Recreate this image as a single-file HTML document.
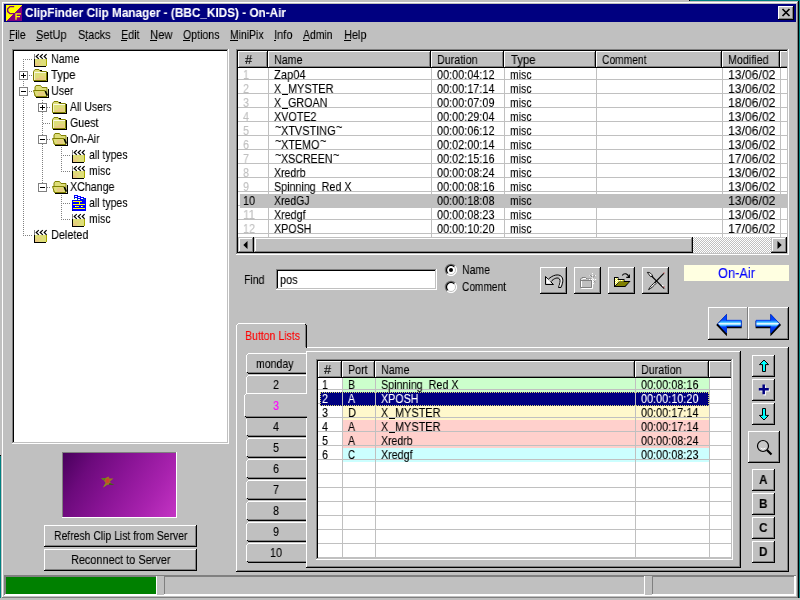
<!DOCTYPE html>
<html><head><meta charset="utf-8"><title>ClipFinder Clip Manager</title>
<style>
html,body{margin:0;padding:0}
body{width:800px;height:600px;overflow:hidden;background:#c0c0c0;position:relative;font-family:"Liberation Sans",sans-serif}
div,span,svg{position:absolute;display:block}
span{white-space:nowrap;transform-origin:0 0;will-change:transform;-webkit-text-stroke:0.1px}
svg{overflow:visible}
</style></head><body>
<div style="left:690px;top:0px;width:110px;height:1px;background:#008080;"></div>
<div style="left:689px;top:0px;width:1px;height:1px;background:#000;"></div>
<div style="left:799px;top:0px;width:1px;height:598px;background:#008080;"></div>
<div style="left:0px;top:456px;width:1px;height:142px;background:#008080;"></div>
<div style="left:0px;top:455px;width:1px;height:1px;background:#000;"></div>
<div style="left:2px;top:2px;width:795px;height:1px;background:#fff;"></div>
<div style="left:2px;top:2px;width:1px;height:595px;background:#fff;"></div>
<div style="left:797px;top:2px;width:1px;height:596px;background:#808080;"></div>
<div style="left:798px;top:1px;width:1px;height:597px;background:#000;"></div>
<div style="left:2px;top:597px;width:796px;height:1px;background:#808080;"></div>
<div style="left:4px;top:4px;width:792px;height:18px;background:#000080;"></div>
<svg style="left:6px;top:5px" width="16" height="16" viewBox="0 0 16 16" shape-rendering="crispEdges">
<rect width="16" height="16" fill="#800080"/><polygon points="0,0 16,0 0,16" fill="#ffff00"/>
<path d="M8.2,1.6 H4 L1.7,3.8 V6.6 L4,8.7 H8.2" fill="none" stroke="#800080" stroke-width="1.3" shape-rendering="auto"/>
<path d="M10,14.8 V8.8 H15 M10,11.7 H14" fill="none" stroke="#ffff00" stroke-width="1.3" shape-rendering="auto"/>
</svg>
<span style="left:24.7px;top:6px;font-size:13px;line-height:13px;color:#fff;font-weight:bold;transform:scaleX(0.9058)">ClipFinder&nbsp;Clip&nbsp;Manager&nbsp;-&nbsp;(BBC_KIDS)&nbsp;-&nbsp;On-Air</span>
<div style="left:778px;top:6px;width:16px;height:14px;background:#c0c0c0;"></div>
<div style="left:778px;top:6px;width:16px;height:1px;background:#fff;"></div>
<div style="left:778px;top:6px;width:1px;height:14px;background:#fff;"></div>
<div style="left:778px;top:19px;width:16px;height:1px;background:#000;"></div>
<div style="left:793px;top:6px;width:1px;height:14px;background:#000;"></div>
<div style="left:779px;top:18px;width:14px;height:1px;background:#808080;"></div>
<div style="left:792px;top:7px;width:1px;height:12px;background:#808080;"></div>
<svg style="left:782px;top:9px" width="8" height="7" viewBox="0 0 8 7"><path d="M0.5,0 L7.5,7 M7.5,0 L0.5,7" stroke="#000" stroke-width="1.7" fill="none"/></svg>
<span style="left:8.7px;top:28px;font-size:13px;line-height:13px;color:#000;transform:scaleX(0.7875)">File</span>
<div style="left:9px;top:40px;width:5px;height:1px;background:#000;"></div>
<span style="left:35.7px;top:28px;font-size:13px;line-height:13px;color:#000;transform:scaleX(0.8439)">SetUp</span>
<div style="left:36px;top:40px;width:6px;height:1px;background:#000;"></div>
<span style="left:77.7px;top:28px;font-size:13px;line-height:13px;color:#000;transform:scaleX(0.8330)">Stacks</span>
<div style="left:85px;top:40px;width:2px;height:1px;background:#000;"></div>
<span style="left:120.7px;top:28px;font-size:13px;line-height:13px;color:#000;transform:scaleX(0.8257)">Edit</span>
<div style="left:121px;top:40px;width:6px;height:1px;background:#000;"></div>
<span style="left:149.7px;top:28px;font-size:13px;line-height:13px;color:#000;transform:scaleX(0.8649)">New</span>
<div style="left:150px;top:40px;width:7px;height:1px;background:#000;"></div>
<span style="left:182.7px;top:28px;font-size:13px;line-height:13px;color:#000;transform:scaleX(0.8145)">Options</span>
<div style="left:183px;top:40px;width:7px;height:1px;background:#000;"></div>
<span style="left:229.7px;top:28px;font-size:13px;line-height:13px;color:#000;transform:scaleX(0.7994)">MiniPix</span>
<div style="left:230px;top:40px;width:8px;height:1px;background:#000;"></div>
<span style="left:273.7px;top:28px;font-size:13px;line-height:13px;color:#000;transform:scaleX(0.8530)">Info</span>
<div style="left:274px;top:40px;width:2px;height:1px;background:#000;"></div>
<span style="left:302.7px;top:28px;font-size:13px;line-height:13px;color:#000;transform:scaleX(0.8003)">Admin</span>
<div style="left:303px;top:40px;width:6px;height:1px;background:#000;"></div>
<span style="left:343.7px;top:28px;font-size:13px;line-height:13px;color:#000;transform:scaleX(0.8411)">Help</span>
<div style="left:344px;top:40px;width:7px;height:1px;background:#000;"></div>
<div style="left:12px;top:49px;width:217px;height:395px;background:#fff;"></div>
<div style="left:12px;top:49px;width:217px;height:1px;background:#808080;"></div>
<div style="left:12px;top:49px;width:1px;height:395px;background:#808080;"></div>
<div style="left:12px;top:443px;width:217px;height:1px;background:#fff;"></div>
<div style="left:228px;top:49px;width:1px;height:395px;background:#fff;"></div>
<div style="left:13px;top:50px;width:215px;height:1px;background:#000;"></div>
<div style="left:13px;top:50px;width:1px;height:393px;background:#000;"></div>
<div style="left:13px;top:442px;width:215px;height:1px;background:#c0c0c0;"></div>
<div style="left:227px;top:50px;width:1px;height:393px;background:#c0c0c0;"></div>
<div style="left:23px;top:59px;width:1px;height:177px;background:repeating-linear-gradient(180deg,#808080 0 1px,transparent 1px 2px)"></div>
<div style="left:42px;top:100px;width:1px;height:88px;background:repeating-linear-gradient(180deg,#808080 0 1px,transparent 1px 2px)"></div>
<div style="left:61px;top:147px;width:1px;height:25px;background:repeating-linear-gradient(180deg,#808080 0 1px,transparent 1px 2px)"></div>
<div style="left:61px;top:195px;width:1px;height:25px;background:repeating-linear-gradient(180deg,#808080 0 1px,transparent 1px 2px)"></div>
<div style="left:23px;top:59px;width:9px;height:1px;background:repeating-linear-gradient(90deg,#808080 0 1px,transparent 1px 2px)"></div>
<svg style="left:34px;top:54px" width="13" height="13" viewBox="0 0 13 13">
<rect x="0" y="0" width="1" height="5" fill="#808080"/>
<rect x="1" y="5" width="11" height="7" fill="#dede78"/>
<rect x="1" y="9" width="4" height="3" fill="#e8c880"/><rect x="3" y="7" width="4" height="3" fill="#e4d27c"/>
<rect x="12" y="5" width="1" height="7" fill="#a8a800"/>
<rect x="0" y="5" width="1" height="8" fill="#000"/><rect x="0" y="12" width="12" height="1" fill="#000"/>
<path d="M4.8,0.1 L2.2,2.5 L4.8,4.9 M8.8,0.1 L6.2,2.5 L8.8,4.9 M12.6,0.1 L10.2,2.5 L12.6,4.9" fill="none" stroke="#000" stroke-width="1.2" stroke-linecap="butt"/>
</svg>
<span style="left:51.2px;top:52px;font-size:13px;line-height:13px;color:#000;transform:scaleX(0.8216)">Name</span>
<div style="left:29px;top:75px;width:3px;height:1px;background:repeating-linear-gradient(90deg,#808080 0 1px,transparent 1px 2px)"></div>
<div style="left:19px;top:71px;width:9px;height:9px;background:#808080;"></div>
<div style="left:20px;top:72px;width:7px;height:7px;background:#fff;"></div>
<div style="left:21px;top:75px;width:5px;height:1px;background:#000;"></div>
<div style="left:23px;top:73px;width:1px;height:5px;background:#000;"></div>
<svg style="left:33px;top:69px" width="15" height="13" viewBox="0 0 15 13" shape-rendering="crispEdges">
<path d="M1,2 L2,1 H6 L7,2 V3 H13 V12 H1 Z" fill="#dede78"/>
<rect x="6" y="7" width="6" height="4" fill="#e6cf80"/><rect x="3" y="9" width="5" height="2" fill="#e8c880"/>
<rect x="2" y="3" width="11" height="1" fill="#fff" opacity=".8"/><rect x="1" y="3" width="1" height="8" fill="#fff" opacity=".6"/>
<path d="M0.5,2.5 V11.5 H13.5 V2.5 H7.5 M0.5,2.5 L2,0.5 H6 L7.5,2.5" fill="none" stroke="#808000" stroke-width="1" shape-rendering="auto"/>
<rect x="14" y="3" width="1" height="10" fill="#000"/><rect x="1" y="12" width="14" height="1" fill="#000"/>
<rect x="7" y="1" width="2" height="1" fill="#000"/>
</svg>
<span style="left:51.2px;top:68px;font-size:13px;line-height:13px;color:#000;transform:scaleX(0.8692)">Type</span>
<div style="left:29px;top:91px;width:3px;height:1px;background:repeating-linear-gradient(90deg,#808080 0 1px,transparent 1px 2px)"></div>
<div style="left:19px;top:87px;width:9px;height:9px;background:#808080;"></div>
<div style="left:20px;top:88px;width:7px;height:7px;background:#fff;"></div>
<div style="left:21px;top:91px;width:5px;height:1px;background:#000;"></div>
<svg style="left:33px;top:85px" width="16" height="13" viewBox="0 0 16 13">
<path d="M2,2 L3,0.5 H7.5 L9,2.5 H14 V11 H2 Z" fill="#dede78" stroke="#808000" stroke-width="1"/>
<path d="M0.5,5.5 H12 L14,11.5 H2.5 Z" fill="#dede78" stroke="#808000" stroke-width="1"/>
<rect x="5" y="7" width="6" height="4" fill="#e6cc80"/>
<path d="M12.3,6 L14.3,10.5" stroke="#000" stroke-width="1.6"/>
<rect x="15" y="4" width="1" height="8" fill="#000"/><rect x="3" y="12" width="13" height="1" fill="#000"/>
</svg>
<span style="left:51.2px;top:84px;font-size:13px;line-height:13px;color:#000;transform:scaleX(0.8196)">User</span>
<div style="left:47px;top:107px;width:4px;height:1px;background:repeating-linear-gradient(90deg,#808080 0 1px,transparent 1px 2px)"></div>
<div style="left:38px;top:103px;width:9px;height:9px;background:#808080;"></div>
<div style="left:39px;top:104px;width:7px;height:7px;background:#fff;"></div>
<div style="left:40px;top:107px;width:5px;height:1px;background:#000;"></div>
<div style="left:42px;top:105px;width:1px;height:5px;background:#000;"></div>
<svg style="left:52px;top:101px" width="15" height="13" viewBox="0 0 15 13" shape-rendering="crispEdges">
<path d="M1,2 L2,1 H6 L7,2 V3 H13 V12 H1 Z" fill="#dede78"/>
<rect x="6" y="7" width="6" height="4" fill="#e6cf80"/><rect x="3" y="9" width="5" height="2" fill="#e8c880"/>
<rect x="2" y="3" width="11" height="1" fill="#fff" opacity=".8"/><rect x="1" y="3" width="1" height="8" fill="#fff" opacity=".6"/>
<path d="M0.5,2.5 V11.5 H13.5 V2.5 H7.5 M0.5,2.5 L2,0.5 H6 L7.5,2.5" fill="none" stroke="#808000" stroke-width="1" shape-rendering="auto"/>
<rect x="14" y="3" width="1" height="10" fill="#000"/><rect x="1" y="12" width="14" height="1" fill="#000"/>
<rect x="7" y="1" width="2" height="1" fill="#000"/>
</svg>
<span style="left:70.2px;top:100px;font-size:13px;line-height:13px;color:#000;transform:scaleX(0.7978)">All&nbsp;Users</span>
<div style="left:43px;top:123px;width:8px;height:1px;background:repeating-linear-gradient(90deg,#808080 0 1px,transparent 1px 2px)"></div>
<svg style="left:52px;top:117px" width="15" height="13" viewBox="0 0 15 13" shape-rendering="crispEdges">
<path d="M1,2 L2,1 H6 L7,2 V3 H13 V12 H1 Z" fill="#dede78"/>
<rect x="6" y="7" width="6" height="4" fill="#e6cf80"/><rect x="3" y="9" width="5" height="2" fill="#e8c880"/>
<rect x="2" y="3" width="11" height="1" fill="#fff" opacity=".8"/><rect x="1" y="3" width="1" height="8" fill="#fff" opacity=".6"/>
<path d="M0.5,2.5 V11.5 H13.5 V2.5 H7.5 M0.5,2.5 L2,0.5 H6 L7.5,2.5" fill="none" stroke="#808000" stroke-width="1" shape-rendering="auto"/>
<rect x="14" y="3" width="1" height="10" fill="#000"/><rect x="1" y="12" width="14" height="1" fill="#000"/>
<rect x="7" y="1" width="2" height="1" fill="#000"/>
</svg>
<span style="left:70.2px;top:116px;font-size:13px;line-height:13px;color:#000;transform:scaleX(0.8216)">Guest</span>
<div style="left:47px;top:139px;width:4px;height:1px;background:repeating-linear-gradient(90deg,#808080 0 1px,transparent 1px 2px)"></div>
<div style="left:38px;top:135px;width:9px;height:9px;background:#808080;"></div>
<div style="left:39px;top:136px;width:7px;height:7px;background:#fff;"></div>
<div style="left:40px;top:139px;width:5px;height:1px;background:#000;"></div>
<svg style="left:52px;top:133px" width="16" height="13" viewBox="0 0 16 13">
<path d="M2,2 L3,0.5 H7.5 L9,2.5 H14 V11 H2 Z" fill="#dede78" stroke="#808000" stroke-width="1"/>
<path d="M0.5,5.5 H12 L14,11.5 H2.5 Z" fill="#dede78" stroke="#808000" stroke-width="1"/>
<rect x="5" y="7" width="6" height="4" fill="#e6cc80"/>
<path d="M12.3,6 L14.3,10.5" stroke="#000" stroke-width="1.6"/>
<rect x="15" y="4" width="1" height="8" fill="#000"/><rect x="3" y="12" width="13" height="1" fill="#000"/>
</svg>
<span style="left:70.2px;top:132px;font-size:13px;line-height:13px;color:#000;transform:scaleX(0.7854)">On-Air</span>
<div style="left:61px;top:155px;width:9px;height:1px;background:repeating-linear-gradient(90deg,#808080 0 1px,transparent 1px 2px)"></div>
<svg style="left:72px;top:150px" width="13" height="13" viewBox="0 0 13 13">
<rect x="0" y="0" width="1" height="5" fill="#808080"/>
<rect x="1" y="5" width="11" height="7" fill="#dede78"/>
<rect x="1" y="9" width="4" height="3" fill="#e8c880"/><rect x="3" y="7" width="4" height="3" fill="#e4d27c"/>
<rect x="12" y="5" width="1" height="7" fill="#a8a800"/>
<rect x="0" y="5" width="1" height="8" fill="#000"/><rect x="0" y="12" width="12" height="1" fill="#000"/>
<path d="M4.8,0.1 L2.2,2.5 L4.8,4.9 M8.8,0.1 L6.2,2.5 L8.8,4.9 M12.6,0.1 L10.2,2.5 L12.6,4.9" fill="none" stroke="#000" stroke-width="1.2" stroke-linecap="butt"/>
</svg>
<span style="left:89.2px;top:148px;font-size:13px;line-height:13px;color:#000;transform:scaleX(0.8071)">all&nbsp;types</span>
<div style="left:61px;top:171px;width:9px;height:1px;background:repeating-linear-gradient(90deg,#808080 0 1px,transparent 1px 2px)"></div>
<svg style="left:72px;top:166px" width="13" height="13" viewBox="0 0 13 13">
<rect x="0" y="0" width="1" height="5" fill="#808080"/>
<rect x="1" y="5" width="11" height="7" fill="#dede78"/>
<rect x="1" y="9" width="4" height="3" fill="#e8c880"/><rect x="3" y="7" width="4" height="3" fill="#e4d27c"/>
<rect x="12" y="5" width="1" height="7" fill="#a8a800"/>
<rect x="0" y="5" width="1" height="8" fill="#000"/><rect x="0" y="12" width="12" height="1" fill="#000"/>
<path d="M4.8,0.1 L2.2,2.5 L4.8,4.9 M8.8,0.1 L6.2,2.5 L8.8,4.9 M12.6,0.1 L10.2,2.5 L12.6,4.9" fill="none" stroke="#000" stroke-width="1.2" stroke-linecap="butt"/>
</svg>
<span style="left:89.2px;top:164px;font-size:13px;line-height:13px;color:#000;transform:scaleX(0.8047)">misc</span>
<div style="left:47px;top:187px;width:4px;height:1px;background:repeating-linear-gradient(90deg,#808080 0 1px,transparent 1px 2px)"></div>
<div style="left:38px;top:183px;width:9px;height:9px;background:#808080;"></div>
<div style="left:39px;top:184px;width:7px;height:7px;background:#fff;"></div>
<div style="left:40px;top:187px;width:5px;height:1px;background:#000;"></div>
<svg style="left:52px;top:181px" width="16" height="13" viewBox="0 0 16 13">
<path d="M2,2 L3,0.5 H7.5 L9,2.5 H14 V11 H2 Z" fill="#dede78" stroke="#808000" stroke-width="1"/>
<path d="M0.5,5.5 H12 L14,11.5 H2.5 Z" fill="#dede78" stroke="#808000" stroke-width="1"/>
<rect x="5" y="7" width="6" height="4" fill="#e6cc80"/>
<path d="M12.3,6 L14.3,10.5" stroke="#000" stroke-width="1.6"/>
<rect x="15" y="4" width="1" height="8" fill="#000"/><rect x="3" y="12" width="13" height="1" fill="#000"/>
</svg>
<span style="left:70.2px;top:180px;font-size:13px;line-height:13px;color:#000;transform:scaleX(0.8205)">XChange</span>
<div style="left:61px;top:203px;width:9px;height:1px;background:repeating-linear-gradient(90deg,#808080 0 1px,transparent 1px 2px)"></div>
<svg style="left:72px;top:195px" width="14" height="16" viewBox="0 0 14 16" shape-rendering="crispEdges">
<rect x="2" y="0" width="4" height="3" fill="#0000ff"/><rect x="5" y="1" width="4" height="3" fill="#0000ff"/><rect x="8" y="2" width="4" height="3" fill="#0000ff"/><rect x="11" y="3" width="3" height="2" fill="#0000ff"/>
<rect x="3" y="1" width="2" height="1" fill="#fff"/><rect x="6" y="2" width="2" height="1" fill="#fff"/><rect x="9" y="3" width="2" height="1" fill="#fff"/>
<rect x="2" y="3" width="1" height="1" fill="#008080"/><rect x="5" y="4" width="1" height="1" fill="#008080"/><rect x="11" y="4" width="2" height="1" fill="#008080"/>
<rect x="0" y="5" width="14" height="11" fill="#0000ff"/>
<rect x="1" y="6" width="9" height="1" fill="#ffff00"/><rect x="7" y="7" width="1" height="2" fill="#ffff00"/><rect x="1" y="9" width="12" height="1" fill="#ffff00"/>
<rect x="3" y="11" width="4" height="1" fill="#ffff00"/><rect x="9" y="11" width="2" height="1" fill="#ffff00"/><rect x="3" y="11" width="1" height="1" fill="#fff"/><rect x="9" y="11" width="1" height="1" fill="#fff"/>
<rect x="1" y="13" width="12" height="1" fill="#ffff00"/><rect x="0" y="15" width="1" height="1" fill="#000080"/>
</svg>
<span style="left:89.2px;top:196px;font-size:13px;line-height:13px;color:#000;transform:scaleX(0.8071)">all&nbsp;types</span>
<div style="left:61px;top:219px;width:9px;height:1px;background:repeating-linear-gradient(90deg,#808080 0 1px,transparent 1px 2px)"></div>
<svg style="left:72px;top:214px" width="13" height="13" viewBox="0 0 13 13">
<rect x="0" y="0" width="1" height="5" fill="#808080"/>
<rect x="1" y="5" width="11" height="7" fill="#dede78"/>
<rect x="1" y="9" width="4" height="3" fill="#e8c880"/><rect x="3" y="7" width="4" height="3" fill="#e4d27c"/>
<rect x="12" y="5" width="1" height="7" fill="#a8a800"/>
<rect x="0" y="5" width="1" height="8" fill="#000"/><rect x="0" y="12" width="12" height="1" fill="#000"/>
<path d="M4.8,0.1 L2.2,2.5 L4.8,4.9 M8.8,0.1 L6.2,2.5 L8.8,4.9 M12.6,0.1 L10.2,2.5 L12.6,4.9" fill="none" stroke="#000" stroke-width="1.2" stroke-linecap="butt"/>
</svg>
<span style="left:89.2px;top:212px;font-size:13px;line-height:13px;color:#000;transform:scaleX(0.8047)">misc</span>
<div style="left:23px;top:235px;width:9px;height:1px;background:repeating-linear-gradient(90deg,#808080 0 1px,transparent 1px 2px)"></div>
<svg style="left:34px;top:230px" width="13" height="13" viewBox="0 0 13 13">
<rect x="0" y="0" width="1" height="5" fill="#808080"/>
<rect x="1" y="5" width="11" height="7" fill="#dede78"/>
<rect x="1" y="9" width="4" height="3" fill="#e8c880"/><rect x="3" y="7" width="4" height="3" fill="#e4d27c"/>
<rect x="12" y="5" width="1" height="7" fill="#a8a800"/>
<rect x="0" y="5" width="1" height="8" fill="#000"/><rect x="0" y="12" width="12" height="1" fill="#000"/>
<path d="M4.8,0.1 L2.2,2.5 L4.8,4.9 M8.8,0.1 L6.2,2.5 L8.8,4.9 M12.6,0.1 L10.2,2.5 L12.6,4.9" fill="none" stroke="#000" stroke-width="1.2" stroke-linecap="butt"/>
</svg>
<span style="left:51.2px;top:228px;font-size:13px;line-height:13px;color:#000;transform:scaleX(0.8365)">Deleted</span>
<div style="left:236px;top:49px;width:553px;height:206px;background:#fff;"></div>
<div style="left:236px;top:49px;width:553px;height:1px;background:#808080;"></div>
<div style="left:236px;top:49px;width:1px;height:206px;background:#808080;"></div>
<div style="left:236px;top:254px;width:553px;height:1px;background:#fff;"></div>
<div style="left:788px;top:49px;width:1px;height:206px;background:#fff;"></div>
<div style="left:237px;top:50px;width:551px;height:1px;background:#000;"></div>
<div style="left:237px;top:50px;width:1px;height:204px;background:#000;"></div>
<div style="left:237px;top:253px;width:551px;height:1px;background:#c0c0c0;"></div>
<div style="left:787px;top:50px;width:1px;height:204px;background:#c0c0c0;"></div>
<div style="left:238px;top:51px;width:30px;height:17px;background:#c0c0c0;"></div>
<div style="left:238px;top:51px;width:30px;height:1px;background:#fff;"></div>
<div style="left:238px;top:51px;width:1px;height:16px;background:#fff;"></div>
<div style="left:238px;top:67px;width:30px;height:1px;background:#000;"></div>
<div style="left:267px;top:51px;width:1px;height:17px;background:#000;"></div>
<div style="left:239px;top:66px;width:28px;height:1px;background:#808080;"></div>
<div style="left:266px;top:52px;width:1px;height:15px;background:#808080;"></div>
<div style="left:268px;top:51px;width:163px;height:17px;background:#c0c0c0;"></div>
<div style="left:268px;top:51px;width:163px;height:1px;background:#fff;"></div>
<div style="left:268px;top:51px;width:1px;height:16px;background:#fff;"></div>
<div style="left:268px;top:67px;width:163px;height:1px;background:#000;"></div>
<div style="left:430px;top:51px;width:1px;height:17px;background:#000;"></div>
<div style="left:269px;top:66px;width:161px;height:1px;background:#808080;"></div>
<div style="left:429px;top:52px;width:1px;height:15px;background:#808080;"></div>
<div style="left:431px;top:51px;width:73px;height:17px;background:#c0c0c0;"></div>
<div style="left:431px;top:51px;width:73px;height:1px;background:#fff;"></div>
<div style="left:431px;top:51px;width:1px;height:16px;background:#fff;"></div>
<div style="left:431px;top:67px;width:73px;height:1px;background:#000;"></div>
<div style="left:503px;top:51px;width:1px;height:17px;background:#000;"></div>
<div style="left:432px;top:66px;width:71px;height:1px;background:#808080;"></div>
<div style="left:502px;top:52px;width:1px;height:15px;background:#808080;"></div>
<div style="left:504px;top:51px;width:92px;height:17px;background:#c0c0c0;"></div>
<div style="left:504px;top:51px;width:92px;height:1px;background:#fff;"></div>
<div style="left:504px;top:51px;width:1px;height:16px;background:#fff;"></div>
<div style="left:504px;top:67px;width:92px;height:1px;background:#000;"></div>
<div style="left:595px;top:51px;width:1px;height:17px;background:#000;"></div>
<div style="left:505px;top:66px;width:90px;height:1px;background:#808080;"></div>
<div style="left:594px;top:52px;width:1px;height:15px;background:#808080;"></div>
<div style="left:596px;top:51px;width:126px;height:17px;background:#c0c0c0;"></div>
<div style="left:596px;top:51px;width:126px;height:1px;background:#fff;"></div>
<div style="left:596px;top:51px;width:1px;height:16px;background:#fff;"></div>
<div style="left:596px;top:67px;width:126px;height:1px;background:#000;"></div>
<div style="left:721px;top:51px;width:1px;height:17px;background:#000;"></div>
<div style="left:597px;top:66px;width:124px;height:1px;background:#808080;"></div>
<div style="left:720px;top:52px;width:1px;height:15px;background:#808080;"></div>
<div style="left:722px;top:51px;width:58px;height:17px;background:#c0c0c0;"></div>
<div style="left:722px;top:51px;width:58px;height:1px;background:#fff;"></div>
<div style="left:722px;top:51px;width:1px;height:16px;background:#fff;"></div>
<div style="left:722px;top:67px;width:58px;height:1px;background:#000;"></div>
<div style="left:779px;top:51px;width:1px;height:17px;background:#000;"></div>
<div style="left:723px;top:66px;width:56px;height:1px;background:#808080;"></div>
<div style="left:778px;top:52px;width:1px;height:15px;background:#808080;"></div>
<div style="left:780px;top:51px;width:7px;height:17px;background:#c0c0c0;"></div>
<div style="left:780px;top:51px;width:7px;height:1px;background:#fff;"></div>
<div style="left:780px;top:51px;width:1px;height:16px;background:#fff;"></div>
<div style="left:780px;top:67px;width:7px;height:1px;background:#000;"></div>
<div style="left:781px;top:66px;width:6px;height:1px;background:#808080;"></div>
<span style="left:244.7px;top:53px;font-size:13px;line-height:13px;color:#000;transform:scaleX(0.9676)">#</span>
<span style="left:273.7px;top:53px;font-size:13px;line-height:13px;color:#000;transform:scaleX(0.8216)">Name</span>
<span style="left:436.7px;top:53px;font-size:13px;line-height:13px;color:#000;transform:scaleX(0.8239)">Duration</span>
<span style="left:510.7px;top:53px;font-size:13px;line-height:13px;color:#000;transform:scaleX(0.8692)">Type</span>
<span style="left:601.7px;top:53px;font-size:13px;line-height:13px;color:#000;transform:scaleX(0.7896)">Comment</span>
<span style="left:727.7px;top:53px;font-size:13px;line-height:13px;color:#000;transform:scaleX(0.8239)">Modified</span>
<div style="left:238px;top:79px;width:549px;height:1px;background:#c0c0c0;"></div>
<div style="left:238px;top:93px;width:549px;height:1px;background:#c0c0c0;"></div>
<div style="left:238px;top:107px;width:549px;height:1px;background:#c0c0c0;"></div>
<div style="left:238px;top:121px;width:549px;height:1px;background:#c0c0c0;"></div>
<div style="left:238px;top:135px;width:549px;height:1px;background:#c0c0c0;"></div>
<div style="left:238px;top:149px;width:549px;height:1px;background:#c0c0c0;"></div>
<div style="left:238px;top:163px;width:549px;height:1px;background:#c0c0c0;"></div>
<div style="left:238px;top:177px;width:549px;height:1px;background:#c0c0c0;"></div>
<div style="left:238px;top:191px;width:549px;height:1px;background:#c0c0c0;"></div>
<div style="left:238px;top:205px;width:549px;height:1px;background:#c0c0c0;"></div>
<div style="left:238px;top:219px;width:549px;height:1px;background:#c0c0c0;"></div>
<div style="left:238px;top:233px;width:549px;height:1px;background:#c0c0c0;"></div>
<div style="left:268px;top:68px;width:1px;height:169px;background:#c0c0c0;"></div>
<div style="left:431px;top:68px;width:1px;height:169px;background:#c0c0c0;"></div>
<div style="left:504px;top:68px;width:1px;height:169px;background:#c0c0c0;"></div>
<div style="left:596px;top:68px;width:1px;height:169px;background:#c0c0c0;"></div>
<div style="left:722px;top:68px;width:1px;height:169px;background:#c0c0c0;"></div>
<div style="left:780px;top:68px;width:1px;height:169px;background:#c0c0c0;"></div>
<div style="left:240px;top:194px;width:547px;height:14px;background:#c0c0c0;"></div>
<span style="left:242.7px;top:68px;font-size:13px;line-height:13px;color:#c0c0c0;transform:scaleX(0.8294)">1</span>
<span style="left:273.7px;top:68px;font-size:13px;line-height:13px;color:#000;transform:scaleX(0.8542)">Zap04</span>
<span style="left:437.1px;top:68px;font-size:13px;line-height:13px;color:#000;transform:scaleX(0.8369)">00:00:04:12</span>
<span style="left:510.4px;top:68px;font-size:13px;line-height:13px;color:#000;transform:scaleX(0.8047)">misc</span>
<span style="left:727.7px;top:68px;font-size:13px;line-height:13px;color:#000;transform:scaleX(0.9383)">13/06/02</span>
<span style="left:242.7px;top:82px;font-size:13px;line-height:13px;color:#c0c0c0;transform:scaleX(0.8294)">2</span>
<span style="left:273.7px;top:82px;font-size:13px;line-height:13px;color:#000;transform:scaleX(0.8072)">X</span>
<div style="left:282px;top:94px;width:6px;height:1px;background:#000;"></div>
<span style="left:287.7px;top:82px;font-size:13px;line-height:13px;color:#000;transform:scaleX(0.8399)">MYSTER</span>
<span style="left:437.1px;top:82px;font-size:13px;line-height:13px;color:#000;transform:scaleX(0.8369)">00:00:17:14</span>
<span style="left:510.4px;top:82px;font-size:13px;line-height:13px;color:#000;transform:scaleX(0.8047)">misc</span>
<span style="left:727.7px;top:82px;font-size:13px;line-height:13px;color:#000;transform:scaleX(0.9383)">13/06/02</span>
<span style="left:242.7px;top:96px;font-size:13px;line-height:13px;color:#c0c0c0;transform:scaleX(0.8294)">3</span>
<span style="left:273.7px;top:96px;font-size:13px;line-height:13px;color:#000;transform:scaleX(0.8072)">X</span>
<div style="left:282px;top:108px;width:6px;height:1px;background:#000;"></div>
<span style="left:287.7px;top:96px;font-size:13px;line-height:13px;color:#000;transform:scaleX(0.8286)">GROAN</span>
<span style="left:437.1px;top:96px;font-size:13px;line-height:13px;color:#000;transform:scaleX(0.8369)">00:00:07:09</span>
<span style="left:510.4px;top:96px;font-size:13px;line-height:13px;color:#000;transform:scaleX(0.8047)">misc</span>
<span style="left:727.7px;top:96px;font-size:13px;line-height:13px;color:#000;transform:scaleX(0.9383)">18/06/02</span>
<span style="left:242.7px;top:110px;font-size:13px;line-height:13px;color:#c0c0c0;transform:scaleX(0.8294)">4</span>
<span style="left:273.7px;top:110px;font-size:13px;line-height:13px;color:#000;transform:scaleX(0.8285)">XVOTE2</span>
<span style="left:437.1px;top:110px;font-size:13px;line-height:13px;color:#000;transform:scaleX(0.8369)">00:00:29:04</span>
<span style="left:510.4px;top:110px;font-size:13px;line-height:13px;color:#000;transform:scaleX(0.8047)">misc</span>
<span style="left:727.7px;top:110px;font-size:13px;line-height:13px;color:#000;transform:scaleX(0.9383)">13/06/02</span>
<span style="left:242.7px;top:124px;font-size:13px;line-height:13px;color:#c0c0c0;transform:scaleX(0.8294)">5</span>
<span style="left:275.0px;top:120px;font-size:13px;line-height:13px;color:#000;transform:scaleX(0.8560)">~</span>
<span style="left:280.5px;top:124px;font-size:13px;line-height:13px;color:#000;transform:scaleX(0.8385)">XTVSTING</span>
<span style="left:335.5px;top:120px;font-size:13px;line-height:13px;color:#000;transform:scaleX(0.8560)">~</span>
<span style="left:437.1px;top:124px;font-size:13px;line-height:13px;color:#000;transform:scaleX(0.8369)">00:00:06:12</span>
<span style="left:510.4px;top:124px;font-size:13px;line-height:13px;color:#000;transform:scaleX(0.8047)">misc</span>
<span style="left:727.7px;top:124px;font-size:13px;line-height:13px;color:#000;transform:scaleX(0.9383)">13/06/02</span>
<span style="left:242.7px;top:138px;font-size:13px;line-height:13px;color:#c0c0c0;transform:scaleX(0.8294)">6</span>
<span style="left:275.0px;top:134px;font-size:13px;line-height:13px;color:#000;transform:scaleX(0.8560)">~</span>
<span style="left:280.5px;top:138px;font-size:13px;line-height:13px;color:#000;transform:scaleX(0.8330)">XTEMO</span>
<span style="left:319.5px;top:134px;font-size:13px;line-height:13px;color:#000;transform:scaleX(0.8560)">~</span>
<span style="left:437.1px;top:138px;font-size:13px;line-height:13px;color:#000;transform:scaleX(0.8369)">00:02:00:14</span>
<span style="left:510.4px;top:138px;font-size:13px;line-height:13px;color:#000;transform:scaleX(0.8047)">misc</span>
<span style="left:727.7px;top:138px;font-size:13px;line-height:13px;color:#000;transform:scaleX(0.9383)">13/06/02</span>
<span style="left:242.7px;top:152px;font-size:13px;line-height:13px;color:#c0c0c0;transform:scaleX(0.8294)">7</span>
<span style="left:275.0px;top:148px;font-size:13px;line-height:13px;color:#000;transform:scaleX(0.8560)">~</span>
<span style="left:280.5px;top:152px;font-size:13px;line-height:13px;color:#000;transform:scaleX(0.8193)">XSCREEN</span>
<span style="left:332.5px;top:148px;font-size:13px;line-height:13px;color:#000;transform:scaleX(0.8560)">~</span>
<span style="left:437.1px;top:152px;font-size:13px;line-height:13px;color:#000;transform:scaleX(0.8369)">00:02:15:16</span>
<span style="left:510.4px;top:152px;font-size:13px;line-height:13px;color:#000;transform:scaleX(0.8047)">misc</span>
<span style="left:727.7px;top:152px;font-size:13px;line-height:13px;color:#000;transform:scaleX(0.9383)">17/06/02</span>
<span style="left:242.7px;top:166px;font-size:13px;line-height:13px;color:#c0c0c0;transform:scaleX(0.8294)">8</span>
<span style="left:273.7px;top:166px;font-size:13px;line-height:13px;color:#000;transform:scaleX(0.8070)">Xredrb</span>
<span style="left:437.1px;top:166px;font-size:13px;line-height:13px;color:#000;transform:scaleX(0.8369)">00:00:08:24</span>
<span style="left:510.4px;top:166px;font-size:13px;line-height:13px;color:#000;transform:scaleX(0.8047)">misc</span>
<span style="left:727.7px;top:166px;font-size:13px;line-height:13px;color:#000;transform:scaleX(0.9383)">13/06/02</span>
<span style="left:242.7px;top:180px;font-size:13px;line-height:13px;color:#c0c0c0;transform:scaleX(0.8294)">9</span>
<span style="left:273.7px;top:180px;font-size:13px;line-height:13px;color:#000;transform:scaleX(0.8246)">Spinning&nbsp;&nbsp;Red&nbsp;X</span>
<span style="left:437.1px;top:180px;font-size:13px;line-height:13px;color:#000;transform:scaleX(0.8369)">00:00:08:16</span>
<span style="left:510.4px;top:180px;font-size:13px;line-height:13px;color:#000;transform:scaleX(0.8047)">misc</span>
<span style="left:727.7px;top:180px;font-size:13px;line-height:13px;color:#000;transform:scaleX(0.9383)">13/06/02</span>
<span style="left:242.7px;top:194px;font-size:13px;line-height:13px;color:#000;transform:scaleX(0.8294)">10</span>
<span style="left:273.7px;top:194px;font-size:13px;line-height:13px;color:#000;transform:scaleX(0.8054)">XredGJ</span>
<span style="left:437.1px;top:194px;font-size:13px;line-height:13px;color:#000;transform:scaleX(0.8369)">00:00:18:08</span>
<span style="left:510.4px;top:194px;font-size:13px;line-height:13px;color:#000;transform:scaleX(0.8047)">misc</span>
<span style="left:727.7px;top:194px;font-size:13px;line-height:13px;color:#000;transform:scaleX(0.9383)">13/06/02</span>
<span style="left:242.7px;top:208px;font-size:13px;line-height:13px;color:#c0c0c0;transform:scaleX(0.8889)">11</span>
<span style="left:273.7px;top:208px;font-size:13px;line-height:13px;color:#000;transform:scaleX(0.8222)">Xredgf</span>
<span style="left:437.1px;top:208px;font-size:13px;line-height:13px;color:#000;transform:scaleX(0.8369)">00:00:08:23</span>
<span style="left:510.4px;top:208px;font-size:13px;line-height:13px;color:#000;transform:scaleX(0.8047)">misc</span>
<span style="left:727.7px;top:208px;font-size:13px;line-height:13px;color:#000;transform:scaleX(0.9383)">13/06/02</span>
<span style="left:242.7px;top:222px;font-size:13px;line-height:13px;color:#c0c0c0;transform:scaleX(0.8294)">12</span>
<span style="left:273.7px;top:222px;font-size:13px;line-height:13px;color:#000;transform:scaleX(0.8239)">XPOSH</span>
<span style="left:437.1px;top:222px;font-size:13px;line-height:13px;color:#000;transform:scaleX(0.8369)">00:00:10:20</span>
<span style="left:510.4px;top:222px;font-size:13px;line-height:13px;color:#000;transform:scaleX(0.8047)">misc</span>
<span style="left:727.7px;top:222px;font-size:13px;line-height:13px;color:#000;transform:scaleX(0.9383)">17/06/02</span>
<div style="left:238px;top:237px;width:549px;height:16px;background:#c0c0c0;"></div>
<div style="left:693px;top:237px;width:78px;height:16px;background:#fff;background-image:conic-gradient(#c0c0c0 25%,#fff 0 50%,#c0c0c0 0 75%,#fff 0);background-size:2px 2px"></div>
<div style="left:238px;top:237px;width:16px;height:16px;background:#c0c0c0;"></div>
<div style="left:238px;top:237px;width:16px;height:1px;background:#c0c0c0;"></div>
<div style="left:238px;top:237px;width:1px;height:16px;background:#c0c0c0;"></div>
<div style="left:238px;top:252px;width:16px;height:1px;background:#000;"></div>
<div style="left:253px;top:237px;width:1px;height:16px;background:#000;"></div>
<div style="left:239px;top:238px;width:14px;height:1px;background:#fff;"></div>
<div style="left:239px;top:238px;width:1px;height:14px;background:#fff;"></div>
<div style="left:239px;top:251px;width:14px;height:1px;background:#808080;"></div>
<div style="left:252px;top:238px;width:1px;height:14px;background:#808080;"></div>
<div style="left:771px;top:237px;width:16px;height:16px;background:#c0c0c0;"></div>
<div style="left:771px;top:237px;width:16px;height:1px;background:#c0c0c0;"></div>
<div style="left:771px;top:237px;width:1px;height:16px;background:#c0c0c0;"></div>
<div style="left:771px;top:252px;width:16px;height:1px;background:#000;"></div>
<div style="left:786px;top:237px;width:1px;height:16px;background:#000;"></div>
<div style="left:772px;top:238px;width:14px;height:1px;background:#fff;"></div>
<div style="left:772px;top:238px;width:1px;height:14px;background:#fff;"></div>
<div style="left:772px;top:251px;width:14px;height:1px;background:#808080;"></div>
<div style="left:785px;top:238px;width:1px;height:14px;background:#808080;"></div>
<div style="left:254px;top:237px;width:439px;height:16px;background:#c0c0c0;"></div>
<div style="left:254px;top:237px;width:439px;height:1px;background:#c0c0c0;"></div>
<div style="left:254px;top:237px;width:1px;height:16px;background:#c0c0c0;"></div>
<div style="left:254px;top:252px;width:439px;height:1px;background:#000;"></div>
<div style="left:692px;top:237px;width:1px;height:16px;background:#000;"></div>
<div style="left:255px;top:238px;width:437px;height:1px;background:#fff;"></div>
<div style="left:255px;top:238px;width:1px;height:14px;background:#fff;"></div>
<div style="left:255px;top:251px;width:437px;height:1px;background:#808080;"></div>
<div style="left:691px;top:238px;width:1px;height:14px;background:#808080;"></div>
<svg style="left:243px;top:241px" width="5" height="8" viewBox="0 0 5 8"><polygon points="4.5,0 4.5,8 0.3,4" fill="#000"/></svg>
<svg style="left:777px;top:241px" width="5" height="8" viewBox="0 0 5 8"><polygon points="0.5,0 0.5,8 4.7,4" fill="#000"/></svg>
<span style="left:243.7px;top:273px;font-size:13px;line-height:13px;color:#000;transform:scaleX(0.8104)">Find</span>
<div style="left:276px;top:269px;width:161px;height:21px;background:#fff;"></div>
<div style="left:276px;top:269px;width:161px;height:1px;background:#808080;"></div>
<div style="left:276px;top:269px;width:1px;height:21px;background:#808080;"></div>
<div style="left:276px;top:289px;width:161px;height:1px;background:#fff;"></div>
<div style="left:436px;top:269px;width:1px;height:21px;background:#fff;"></div>
<div style="left:277px;top:270px;width:159px;height:1px;background:#000;"></div>
<div style="left:277px;top:270px;width:1px;height:19px;background:#000;"></div>
<div style="left:277px;top:288px;width:159px;height:1px;background:#c0c0c0;"></div>
<div style="left:435px;top:270px;width:1px;height:19px;background:#c0c0c0;"></div>
<span style="left:279.7px;top:273px;font-size:13px;line-height:13px;color:#000;transform:scaleX(0.8346)">pos</span>
<svg style="left:445px;top:264px" width="12" height="12" viewBox="0 0 12 12">
<circle cx="6" cy="6" r="5.5" fill="#fff"/>
<path d="M10,2 A5.5,5.5 0 0 0 2,10" fill="none" stroke="#707070" stroke-width="1.2"/>
<path d="M9.2,2.8 A4.5,4.5 0 0 0 2.8,9.2" fill="none" stroke="#000" stroke-width="1.3"/>
<path d="M2,10 A5.5,5.5 0 0 0 10,2" fill="none" stroke="#fff" stroke-width="1"/>
<path d="M2.8,9.2 A4.5,4.5 0 0 0 9.2,2.8" fill="none" stroke="#c0c0c0" stroke-width="1"/>
<circle cx="6" cy="6" r="2" fill="#000"/>
</svg>
<svg style="left:445px;top:281px" width="12" height="12" viewBox="0 0 12 12">
<circle cx="6" cy="6" r="5.5" fill="#fff"/>
<path d="M10,2 A5.5,5.5 0 0 0 2,10" fill="none" stroke="#707070" stroke-width="1.2"/>
<path d="M9.2,2.8 A4.5,4.5 0 0 0 2.8,9.2" fill="none" stroke="#000" stroke-width="1.3"/>
<path d="M2,10 A5.5,5.5 0 0 0 10,2" fill="none" stroke="#fff" stroke-width="1"/>
<path d="M2.8,9.2 A4.5,4.5 0 0 0 9.2,2.8" fill="none" stroke="#c0c0c0" stroke-width="1"/>

</svg>
<span style="left:462.0px;top:263px;font-size:13px;line-height:13px;color:#000;transform:scaleX(0.8072)">Name</span>
<span style="left:462.0px;top:280px;font-size:13px;line-height:13px;color:#000;transform:scaleX(0.7807)">Comment</span>
<div style="left:540px;top:267px;width:27px;height:27px;background:#c0c0c0;"></div>
<div style="left:540px;top:267px;width:27px;height:1px;background:#fff;"></div>
<div style="left:540px;top:267px;width:1px;height:27px;background:#fff;"></div>
<div style="left:540px;top:293px;width:27px;height:1px;background:#000;"></div>
<div style="left:566px;top:267px;width:1px;height:27px;background:#000;"></div>
<div style="left:541px;top:292px;width:25px;height:1px;background:#808080;"></div>
<div style="left:565px;top:268px;width:1px;height:25px;background:#808080;"></div>
<div style="left:574px;top:267px;width:27px;height:27px;background:#c0c0c0;"></div>
<div style="left:574px;top:267px;width:27px;height:1px;background:#fff;"></div>
<div style="left:574px;top:267px;width:1px;height:27px;background:#fff;"></div>
<div style="left:574px;top:293px;width:27px;height:1px;background:#000;"></div>
<div style="left:600px;top:267px;width:1px;height:27px;background:#000;"></div>
<div style="left:575px;top:292px;width:25px;height:1px;background:#808080;"></div>
<div style="left:599px;top:268px;width:1px;height:25px;background:#808080;"></div>
<div style="left:608px;top:267px;width:27px;height:27px;background:#c0c0c0;"></div>
<div style="left:608px;top:267px;width:27px;height:1px;background:#fff;"></div>
<div style="left:608px;top:267px;width:1px;height:27px;background:#fff;"></div>
<div style="left:608px;top:293px;width:27px;height:1px;background:#000;"></div>
<div style="left:634px;top:267px;width:1px;height:27px;background:#000;"></div>
<div style="left:609px;top:292px;width:25px;height:1px;background:#808080;"></div>
<div style="left:633px;top:268px;width:1px;height:25px;background:#808080;"></div>
<div style="left:642px;top:267px;width:27px;height:27px;background:#c0c0c0;"></div>
<div style="left:642px;top:267px;width:27px;height:1px;background:#fff;"></div>
<div style="left:642px;top:267px;width:1px;height:27px;background:#fff;"></div>
<div style="left:642px;top:293px;width:27px;height:1px;background:#000;"></div>
<div style="left:668px;top:267px;width:1px;height:27px;background:#000;"></div>
<div style="left:643px;top:292px;width:25px;height:1px;background:#808080;"></div>
<div style="left:667px;top:268px;width:1px;height:25px;background:#808080;"></div>
<svg style="left:540px;top:267px" width="27" height="27" viewBox="0 0 27 27">
<path d="M5.5,9.5 V17.5 H13.5 L10.8,14.8 C14,11 18,10 19.5,12 C21,14 19.5,17 18.5,20.5 L21,20.5 C22.5,17 24,12.5 21.5,9.5 C18.5,6.5 12.5,8 8.3,12.3 Z" fill="#c0c0c0" stroke="#000" stroke-width="1"/>
<path d="M6.5,11 V16.5 H11.5 Z" fill="#fff"/>
<path d="M19.7,19.5 C21,16 22.3,12.5 20.3,10.3" fill="none" stroke="#fff" stroke-width="1"/>
</svg>
<svg style="left:574px;top:267px" width="27" height="27" viewBox="0 0 27 27">
<path d="M6.5,20.5 V12 L8,10.5 H11.5 L13,12 H17.5 V20.5 Z" fill="none" stroke="#fff" stroke-width="1" transform="translate(1,1)"/>
<path d="M6.5,20.5 V12 L8,10.5 H11.5 L13,12 H17.5 V20.5 Z M6.5,13.5 H17.5" fill="none" stroke="#808080" stroke-width="1"/>
<path d="M18.5,6 V11 M15.5,8.5 L21.5,14.5 M15,12.5 H23 M22,8 L17.5,13 M19.5,14 V18" stroke="#fff" stroke-width="1" fill="none" stroke-dasharray="1.2 0.8"/>
<path d="M16.5,8 L18,10.5 M20.5,8.5 L19.5,10.5 M21.5,15 L20,14" stroke="#808080" stroke-width="1" fill="none"/>
</svg>
<svg style="left:608px;top:267px" width="27" height="27" viewBox="0 0 27 27">
<path d="M6,20 V10 H10.5 V12 H16.5 V14 H22.6 L17.3,20 Z" fill="#000"/>
<path d="M7,18.5 V11 H9.7 V13 H15.7 V14.5 H10.5 Z" fill="#ffff40"/>
<path d="M7,11 h1 v1 h-1z M9,11 h.7 v1 h-.7z M8,12 h1 v1 h-1z M7,13 h1 v1 h-1z M9,13 h1 v1 h-1z M11,13 h1 v1 h-1z M13,13 h1 v1 h-1z M8,14 h1 v1 h-1z M10,14 h1 v.5 h-1z M7,15 h1 v1 h-1z M9,15 h.8 v1 h-.8z M8,16 h.8 v1 h-.8z M7,17 h.7 v1 h-.7z" fill="#fff"/>
<path d="M10.8,14.9 H21 L16.9,19 H7.6 Z" fill="#808000"/>
<path d="M14.3,8.6 C15.5,6.2 19.3,5.8 20.8,10" fill="none" stroke="#000" stroke-width="1.1"/>
<path d="M18.3,10.4 H21.4 V7.6" fill="none" stroke="#000" stroke-width="1.1"/>
</svg>
<svg style="left:642px;top:267px" width="27" height="27" viewBox="0 0 27 27">
<path d="M5.3,5.4 C7.6,5 9.6,6.6 10.8,9.3 L8.6,9.6 C7.6,8.2 6.4,6.8 5.3,5.4 Z" fill="#fff" stroke="#000" stroke-width="0.9"/>
<path d="M9.5,9 L22.2,21.6" fill="none" stroke="#000" stroke-width="1.1"/>
<path d="M21.8,6.3 L12.5,16" fill="none" stroke="#000" stroke-width="1.1"/>
<path d="M13.2,15.2 C10.6,17.2 8,19.6 6.6,22.6 C9.2,21.4 11.6,19 14.2,16.2 Z" fill="#fff" stroke="#000" stroke-width="0.9"/>
<rect x="21.5" y="5.5" width="1" height="1" fill="#d02020"/><rect x="21.5" y="19.5" width="1" height="1" fill="#d02020"/><rect x="20" y="18" width="1.4" height="1.2" fill="#fff"/><rect x="22.5" y="21.5" width="1" height="1" fill="#909090"/>
</svg>
<div style="left:684px;top:265px;width:105px;height:16px;background:#ffffe1;"></div>
<span style="left:718.0px;top:266px;font-size:14px;line-height:14px;color:#0000ff;transform:scaleX(0.9150)">On-Air</span>
<div style="left:708px;top:307px;width:40px;height:33px;background:#c0c0c0;"></div>
<div style="left:708px;top:307px;width:40px;height:1px;background:#fff;"></div>
<div style="left:708px;top:307px;width:1px;height:33px;background:#fff;"></div>
<div style="left:708px;top:339px;width:40px;height:1px;background:#000;"></div>
<div style="left:747px;top:307px;width:1px;height:33px;background:#000;"></div>
<div style="left:709px;top:338px;width:38px;height:1px;background:#808080;"></div>
<div style="left:746px;top:308px;width:1px;height:31px;background:#808080;"></div>
<div style="left:748px;top:307px;width:41px;height:33px;background:#c0c0c0;"></div>
<div style="left:748px;top:307px;width:41px;height:1px;background:#fff;"></div>
<div style="left:748px;top:307px;width:1px;height:33px;background:#fff;"></div>
<div style="left:748px;top:339px;width:41px;height:1px;background:#000;"></div>
<div style="left:788px;top:307px;width:1px;height:33px;background:#000;"></div>
<div style="left:749px;top:338px;width:39px;height:1px;background:#808080;"></div>
<div style="left:787px;top:308px;width:1px;height:31px;background:#808080;"></div>
<div style="left:746px;top:308px;width:1px;height:31px;background:#c0c0c0;"></div>
<div style="left:747px;top:307px;width:1px;height:32px;background:#808080;"></div>
<div style="left:746px;top:338px;width:1px;height:1px;background:#808080;"></div>
<svg style="left:708px;top:307px" width="81" height="33" viewBox="0 0 81 33">
<defs><linearGradient id="ag" x1="0" y1="0" x2="0" y2="1"><stop offset="0" stop-color="#0038ff"/><stop offset=".3" stop-color="#0048ff"/><stop offset=".42" stop-color="#38c0ff"/><stop offset=".5" stop-color="#fff"/><stop offset=".58" stop-color="#58d0ff"/><stop offset=".68" stop-color="#0040ff"/><stop offset="1" stop-color="#0028c0"/></linearGradient></defs>
<path d="M9.5,16.8 L18.5,7.3 V13.3 H33.3 V19.3 H18.5 V26.3 Z" fill="#000" stroke="#000" stroke-width="1.4" transform="translate(-0.3,1.3)"/>
<path d="M9.8,16.7 L18.5,7.5 V13.3 H33.3 V19.2 H18.5 V25.9 Z" fill="url(#ag)" stroke="#0038f0" stroke-width="0.8"/>
<path d="M71.8,16.8 L62.8,7.3 V13.3 H48 V19.3 H62.8 V26.3 Z" fill="#000" stroke="#000" stroke-width="1.4" transform="translate(0.3,1.3)"/>
<path d="M71.5,16.7 L62.8,7.5 V13.3 H48 V19.2 H62.8 V25.9 Z" fill="url(#ag)" stroke="#0038f0" stroke-width="0.8"/>
</svg>
<div style="left:236px;top:325px;width:1px;height:246px;background:#fff;"></div>
<div style="left:307px;top:347px;width:481px;height:1px;background:#fff;"></div>
<div style="left:787px;top:348px;width:1px;height:223px;background:#808080;"></div>
<div style="left:788px;top:347px;width:1px;height:225px;background:#000;"></div>
<div style="left:237px;top:570px;width:551px;height:1px;background:#808080;"></div>
<div style="left:236px;top:571px;width:553px;height:1px;background:#000;"></div>
<div style="left:238px;top:323px;width:67px;height:1px;background:#fff;"></div>
<div style="left:237px;top:324px;width:1px;height:1px;background:#fff;"></div>
<div style="left:305px;top:325px;width:1px;height:22px;background:#808080;"></div>
<div style="left:306px;top:325px;width:1px;height:23px;background:#000;"></div>
<div style="left:305px;top:324px;width:1px;height:1px;background:#000;"></div>
<span style="left:244.7px;top:329px;font-size:13px;line-height:13px;color:#ff0000;transform:scaleX(0.8096)">Button&nbsp;Lists</span>
<div style="left:306px;top:351px;width:434px;height:1px;background:#fff;"></div>
<div style="left:306px;top:351px;width:1px;height:43px;background:#fff;"></div>
<div style="left:306px;top:418px;width:1px;height:149px;background:#fff;"></div>
<div style="left:739px;top:352px;width:1px;height:215px;background:#808080;"></div>
<div style="left:740px;top:351px;width:1px;height:217px;background:#000;"></div>
<div style="left:307px;top:566px;width:433px;height:1px;background:#808080;"></div>
<div style="left:306px;top:567px;width:435px;height:1px;background:#000;"></div>
<div style="left:248px;top:353px;width:58px;height:1px;background:#fff;"></div>
<div style="left:247px;top:354px;width:1px;height:1px;background:#fff;"></div>
<div style="left:246px;top:355px;width:1px;height:17px;background:#fff;"></div>
<div style="left:248px;top:373px;width:58px;height:1px;background:#000;"></div>
<div style="left:247px;top:372px;width:1px;height:1px;background:#000;"></div>
<div style="left:248px;top:372px;width:58px;height:1px;background:#808080;"></div>
<span style="left:256.2px;top:357px;font-size:13px;line-height:13px;color:#000;transform:scaleX(0.8105)">monday</span>
<div style="left:248px;top:375px;width:58px;height:1px;background:#fff;"></div>
<div style="left:247px;top:376px;width:1px;height:1px;background:#fff;"></div>
<div style="left:246px;top:377px;width:1px;height:16px;background:#fff;"></div>
<div style="left:248px;top:394px;width:58px;height:1px;background:#000;"></div>
<div style="left:247px;top:393px;width:1px;height:1px;background:#000;"></div>
<div style="left:248px;top:393px;width:58px;height:1px;background:#808080;"></div>
<span style="left:272.5px;top:378px;font-size:13px;line-height:13px;color:#000;transform:scaleX(0.8294)">2</span>
<div style="left:246px;top:393px;width:60px;height:1px;background:#fff;"></div>
<div style="left:245px;top:394px;width:1px;height:1px;background:#fff;"></div>
<div style="left:244px;top:395px;width:1px;height:21px;background:#fff;"></div>
<div style="left:246px;top:417px;width:61px;height:1px;background:#000;"></div>
<div style="left:245px;top:416px;width:1px;height:1px;background:#000;"></div>
<div style="left:246px;top:416px;width:61px;height:1px;background:#808080;"></div>
<span style="left:272.5px;top:399px;font-size:13px;line-height:13px;color:#ff00ff;transform:scaleX(0.8294)">3</span>
<div style="left:246px;top:393px;width:61px;height:1px;background:#fff;"></div>
<div style="left:246px;top:419px;width:1px;height:16px;background:#fff;"></div>
<div style="left:248px;top:436px;width:58px;height:1px;background:#000;"></div>
<div style="left:247px;top:435px;width:1px;height:1px;background:#000;"></div>
<div style="left:248px;top:435px;width:58px;height:1px;background:#808080;"></div>
<span style="left:272.5px;top:420px;font-size:13px;line-height:13px;color:#000;transform:scaleX(0.8294)">4</span>
<div style="left:248px;top:438px;width:58px;height:1px;background:#fff;"></div>
<div style="left:247px;top:439px;width:1px;height:1px;background:#fff;"></div>
<div style="left:246px;top:440px;width:1px;height:16px;background:#fff;"></div>
<div style="left:248px;top:457px;width:58px;height:1px;background:#000;"></div>
<div style="left:247px;top:456px;width:1px;height:1px;background:#000;"></div>
<div style="left:248px;top:456px;width:58px;height:1px;background:#808080;"></div>
<span style="left:272.5px;top:441px;font-size:13px;line-height:13px;color:#000;transform:scaleX(0.8294)">5</span>
<div style="left:248px;top:459px;width:58px;height:1px;background:#fff;"></div>
<div style="left:247px;top:460px;width:1px;height:1px;background:#fff;"></div>
<div style="left:246px;top:461px;width:1px;height:16px;background:#fff;"></div>
<div style="left:248px;top:478px;width:58px;height:1px;background:#000;"></div>
<div style="left:247px;top:477px;width:1px;height:1px;background:#000;"></div>
<div style="left:248px;top:477px;width:58px;height:1px;background:#808080;"></div>
<span style="left:272.5px;top:462px;font-size:13px;line-height:13px;color:#000;transform:scaleX(0.8294)">6</span>
<div style="left:248px;top:480px;width:58px;height:1px;background:#fff;"></div>
<div style="left:247px;top:481px;width:1px;height:1px;background:#fff;"></div>
<div style="left:246px;top:482px;width:1px;height:16px;background:#fff;"></div>
<div style="left:248px;top:499px;width:58px;height:1px;background:#000;"></div>
<div style="left:247px;top:498px;width:1px;height:1px;background:#000;"></div>
<div style="left:248px;top:498px;width:58px;height:1px;background:#808080;"></div>
<span style="left:272.5px;top:483px;font-size:13px;line-height:13px;color:#000;transform:scaleX(0.8294)">7</span>
<div style="left:248px;top:501px;width:58px;height:1px;background:#fff;"></div>
<div style="left:247px;top:502px;width:1px;height:1px;background:#fff;"></div>
<div style="left:246px;top:503px;width:1px;height:16px;background:#fff;"></div>
<div style="left:248px;top:520px;width:58px;height:1px;background:#000;"></div>
<div style="left:247px;top:519px;width:1px;height:1px;background:#000;"></div>
<div style="left:248px;top:519px;width:58px;height:1px;background:#808080;"></div>
<span style="left:272.5px;top:504px;font-size:13px;line-height:13px;color:#000;transform:scaleX(0.8294)">8</span>
<div style="left:248px;top:522px;width:58px;height:1px;background:#fff;"></div>
<div style="left:247px;top:523px;width:1px;height:1px;background:#fff;"></div>
<div style="left:246px;top:524px;width:1px;height:16px;background:#fff;"></div>
<div style="left:248px;top:541px;width:58px;height:1px;background:#000;"></div>
<div style="left:247px;top:540px;width:1px;height:1px;background:#000;"></div>
<div style="left:248px;top:540px;width:58px;height:1px;background:#808080;"></div>
<span style="left:272.5px;top:525px;font-size:13px;line-height:13px;color:#000;transform:scaleX(0.8294)">9</span>
<div style="left:248px;top:543px;width:58px;height:1px;background:#fff;"></div>
<div style="left:247px;top:544px;width:1px;height:1px;background:#fff;"></div>
<div style="left:246px;top:545px;width:1px;height:16px;background:#fff;"></div>
<div style="left:248px;top:562px;width:58px;height:1px;background:#000;"></div>
<div style="left:247px;top:561px;width:1px;height:1px;background:#000;"></div>
<div style="left:248px;top:561px;width:58px;height:1px;background:#808080;"></div>
<span style="left:269.5px;top:546px;font-size:13px;line-height:13px;color:#000;transform:scaleX(0.8294)">10</span>
<div style="left:247px;top:393px;width:59px;height:1px;background:#fff;"></div>
<div style="left:247px;top:394px;width:59px;height:1px;background:#c0c0c0;"></div>
<div style="left:316px;top:359px;width:417px;height:201px;background:#fff;"></div>
<div style="left:316px;top:359px;width:417px;height:1px;background:#808080;"></div>
<div style="left:316px;top:359px;width:1px;height:201px;background:#808080;"></div>
<div style="left:316px;top:559px;width:417px;height:1px;background:#fff;"></div>
<div style="left:732px;top:359px;width:1px;height:201px;background:#fff;"></div>
<div style="left:317px;top:360px;width:415px;height:1px;background:#000;"></div>
<div style="left:317px;top:360px;width:1px;height:199px;background:#000;"></div>
<div style="left:317px;top:558px;width:415px;height:1px;background:#c0c0c0;"></div>
<div style="left:731px;top:360px;width:1px;height:199px;background:#c0c0c0;"></div>
<div style="left:318px;top:361px;width:24px;height:17px;background:#c0c0c0;"></div>
<div style="left:318px;top:361px;width:24px;height:1px;background:#fff;"></div>
<div style="left:318px;top:361px;width:1px;height:16px;background:#fff;"></div>
<div style="left:318px;top:377px;width:24px;height:1px;background:#000;"></div>
<div style="left:341px;top:361px;width:1px;height:17px;background:#000;"></div>
<div style="left:319px;top:376px;width:22px;height:1px;background:#808080;"></div>
<div style="left:340px;top:362px;width:1px;height:15px;background:#808080;"></div>
<div style="left:342px;top:361px;width:33px;height:17px;background:#c0c0c0;"></div>
<div style="left:342px;top:361px;width:33px;height:1px;background:#fff;"></div>
<div style="left:342px;top:361px;width:1px;height:16px;background:#fff;"></div>
<div style="left:342px;top:377px;width:33px;height:1px;background:#000;"></div>
<div style="left:374px;top:361px;width:1px;height:17px;background:#000;"></div>
<div style="left:343px;top:376px;width:31px;height:1px;background:#808080;"></div>
<div style="left:373px;top:362px;width:1px;height:15px;background:#808080;"></div>
<div style="left:375px;top:361px;width:260px;height:17px;background:#c0c0c0;"></div>
<div style="left:375px;top:361px;width:260px;height:1px;background:#fff;"></div>
<div style="left:375px;top:361px;width:1px;height:16px;background:#fff;"></div>
<div style="left:375px;top:377px;width:260px;height:1px;background:#000;"></div>
<div style="left:634px;top:361px;width:1px;height:17px;background:#000;"></div>
<div style="left:376px;top:376px;width:258px;height:1px;background:#808080;"></div>
<div style="left:633px;top:362px;width:1px;height:15px;background:#808080;"></div>
<div style="left:635px;top:361px;width:74px;height:17px;background:#c0c0c0;"></div>
<div style="left:635px;top:361px;width:74px;height:1px;background:#fff;"></div>
<div style="left:635px;top:361px;width:1px;height:16px;background:#fff;"></div>
<div style="left:635px;top:377px;width:74px;height:1px;background:#000;"></div>
<div style="left:708px;top:361px;width:1px;height:17px;background:#000;"></div>
<div style="left:636px;top:376px;width:72px;height:1px;background:#808080;"></div>
<div style="left:707px;top:362px;width:1px;height:15px;background:#808080;"></div>
<div style="left:709px;top:361px;width:22px;height:17px;background:#c0c0c0;"></div>
<div style="left:709px;top:361px;width:22px;height:1px;background:#fff;"></div>
<div style="left:709px;top:361px;width:1px;height:16px;background:#fff;"></div>
<div style="left:709px;top:377px;width:22px;height:1px;background:#000;"></div>
<div style="left:710px;top:376px;width:21px;height:1px;background:#808080;"></div>
<div style="left:730px;top:362px;width:1px;height:15px;background:#808080;"></div>
<span style="left:324.2px;top:363px;font-size:13px;line-height:13px;color:#000;transform:scaleX(0.9676)">#</span>
<span style="left:347.7px;top:363px;font-size:13px;line-height:13px;color:#000;transform:scaleX(0.8178)">Port</span>
<span style="left:380.7px;top:363px;font-size:13px;line-height:13px;color:#000;transform:scaleX(0.8216)">Name</span>
<span style="left:640.7px;top:363px;font-size:13px;line-height:13px;color:#000;transform:scaleX(0.8239)">Duration</span>
<div style="left:343px;top:378px;width:366px;height:14px;background:#ccffcc;"></div>
<div style="left:343px;top:406px;width:366px;height:14px;background:#fff8cc;"></div>
<div style="left:343px;top:420px;width:366px;height:14px;background:#ffd0cc;"></div>
<div style="left:343px;top:434px;width:366px;height:14px;background:#ffd0cc;"></div>
<div style="left:343px;top:448px;width:366px;height:14px;background:#ccffff;"></div>
<div style="left:318px;top:389px;width:413px;height:1px;background:#c0c0c0;"></div>
<div style="left:318px;top:403px;width:413px;height:1px;background:#c0c0c0;"></div>
<div style="left:318px;top:417px;width:413px;height:1px;background:#c0c0c0;"></div>
<div style="left:318px;top:431px;width:413px;height:1px;background:#c0c0c0;"></div>
<div style="left:318px;top:445px;width:413px;height:1px;background:#c0c0c0;"></div>
<div style="left:318px;top:459px;width:413px;height:1px;background:#c0c0c0;"></div>
<div style="left:318px;top:473px;width:413px;height:1px;background:#c0c0c0;"></div>
<div style="left:318px;top:487px;width:413px;height:1px;background:#c0c0c0;"></div>
<div style="left:318px;top:501px;width:413px;height:1px;background:#c0c0c0;"></div>
<div style="left:318px;top:515px;width:413px;height:1px;background:#c0c0c0;"></div>
<div style="left:318px;top:529px;width:413px;height:1px;background:#c0c0c0;"></div>
<div style="left:318px;top:543px;width:413px;height:1px;background:#c0c0c0;"></div>
<div style="left:318px;top:557px;width:413px;height:1px;background:#c0c0c0;"></div>
<div style="left:342px;top:378px;width:1px;height:180px;background:#c0c0c0;"></div>
<div style="left:375px;top:378px;width:1px;height:180px;background:#c0c0c0;"></div>
<div style="left:635px;top:378px;width:1px;height:180px;background:#c0c0c0;"></div>
<div style="left:709px;top:378px;width:1px;height:180px;background:#c0c0c0;"></div>
<div style="left:320px;top:392px;width:389px;height:14px;background:#000080;"></div>
<div style="left:342px;top:392px;width:1px;height:14px;background:#c0c0c0;"></div>
<div style="left:375px;top:392px;width:1px;height:14px;background:#c0c0c0;"></div>
<div style="left:635px;top:392px;width:1px;height:14px;background:#c0c0c0;"></div>
<div style="left:320px;top:392px;width:389px;height:14px;box-sizing:border-box;border:1px dotted #d8d870"></div>
<span style="left:322.0px;top:378px;font-size:13px;line-height:13px;color:#000;transform:scaleX(0.8294)">1</span>
<span style="left:347.7px;top:378px;font-size:13px;line-height:13px;color:#000;transform:scaleX(0.8072)">B</span>
<span style="left:380.7px;top:378px;font-size:13px;line-height:13px;color:#000;transform:scaleX(0.8246)">Spinning&nbsp;&nbsp;Red&nbsp;X</span>
<span style="left:641.3px;top:378px;font-size:13px;line-height:13px;color:#000;transform:scaleX(0.8369)">00:00:08:16</span>
<span style="left:322.0px;top:392px;font-size:13px;line-height:13px;color:#fff;transform:scaleX(0.8294)">2</span>
<span style="left:347.7px;top:392px;font-size:13px;line-height:13px;color:#fff;transform:scaleX(0.8072)">A</span>
<span style="left:380.7px;top:392px;font-size:13px;line-height:13px;color:#fff;transform:scaleX(0.8239)">XPOSH</span>
<span style="left:641.3px;top:392px;font-size:13px;line-height:13px;color:#fff;transform:scaleX(0.8369)">00:00:10:20</span>
<span style="left:322.0px;top:406px;font-size:13px;line-height:13px;color:#000;transform:scaleX(0.8294)">3</span>
<span style="left:347.7px;top:406px;font-size:13px;line-height:13px;color:#000;transform:scaleX(0.8519)">D</span>
<span style="left:380.7px;top:406px;font-size:13px;line-height:13px;color:#000;transform:scaleX(0.8072)">X</span>
<div style="left:389px;top:418px;width:6px;height:1px;background:#000;"></div>
<span style="left:394.7px;top:406px;font-size:13px;line-height:13px;color:#000;transform:scaleX(0.8399)">MYSTER</span>
<span style="left:641.3px;top:406px;font-size:13px;line-height:13px;color:#000;transform:scaleX(0.8369)">00:00:17:14</span>
<span style="left:322.0px;top:420px;font-size:13px;line-height:13px;color:#000;transform:scaleX(0.8294)">4</span>
<span style="left:347.7px;top:420px;font-size:13px;line-height:13px;color:#000;transform:scaleX(0.8072)">A</span>
<span style="left:380.7px;top:420px;font-size:13px;line-height:13px;color:#000;transform:scaleX(0.8072)">X</span>
<div style="left:389px;top:432px;width:6px;height:1px;background:#000;"></div>
<span style="left:394.7px;top:420px;font-size:13px;line-height:13px;color:#000;transform:scaleX(0.8399)">MYSTER</span>
<span style="left:641.3px;top:420px;font-size:13px;line-height:13px;color:#000;transform:scaleX(0.8369)">00:00:17:14</span>
<span style="left:322.0px;top:434px;font-size:13px;line-height:13px;color:#000;transform:scaleX(0.8294)">5</span>
<span style="left:347.7px;top:434px;font-size:13px;line-height:13px;color:#000;transform:scaleX(0.8072)">A</span>
<span style="left:380.7px;top:434px;font-size:13px;line-height:13px;color:#000;transform:scaleX(0.8070)">Xredrb</span>
<span style="left:641.3px;top:434px;font-size:13px;line-height:13px;color:#000;transform:scaleX(0.8369)">00:00:08:24</span>
<span style="left:322.0px;top:448px;font-size:13px;line-height:13px;color:#000;transform:scaleX(0.8294)">6</span>
<span style="left:347.7px;top:448px;font-size:13px;line-height:13px;color:#000;transform:scaleX(0.7454)">C</span>
<span style="left:380.7px;top:448px;font-size:13px;line-height:13px;color:#000;transform:scaleX(0.8222)">Xredgf</span>
<span style="left:641.3px;top:448px;font-size:13px;line-height:13px;color:#000;transform:scaleX(0.8369)">00:00:08:23</span>
<div style="left:752px;top:355px;width:23px;height:22px;background:#c0c0c0;"></div>
<div style="left:752px;top:355px;width:23px;height:1px;background:#fff;"></div>
<div style="left:752px;top:355px;width:1px;height:22px;background:#fff;"></div>
<div style="left:752px;top:376px;width:23px;height:1px;background:#000;"></div>
<div style="left:774px;top:355px;width:1px;height:22px;background:#000;"></div>
<div style="left:753px;top:375px;width:21px;height:1px;background:#808080;"></div>
<div style="left:773px;top:356px;width:1px;height:20px;background:#808080;"></div>
<div style="left:752px;top:379px;width:23px;height:22px;background:#c0c0c0;"></div>
<div style="left:752px;top:379px;width:23px;height:1px;background:#fff;"></div>
<div style="left:752px;top:379px;width:1px;height:22px;background:#fff;"></div>
<div style="left:752px;top:400px;width:23px;height:1px;background:#000;"></div>
<div style="left:774px;top:379px;width:1px;height:22px;background:#000;"></div>
<div style="left:753px;top:399px;width:21px;height:1px;background:#808080;"></div>
<div style="left:773px;top:380px;width:1px;height:20px;background:#808080;"></div>
<div style="left:752px;top:403px;width:23px;height:22px;background:#c0c0c0;"></div>
<div style="left:752px;top:403px;width:23px;height:1px;background:#fff;"></div>
<div style="left:752px;top:403px;width:1px;height:22px;background:#fff;"></div>
<div style="left:752px;top:424px;width:23px;height:1px;background:#000;"></div>
<div style="left:774px;top:403px;width:1px;height:22px;background:#000;"></div>
<div style="left:753px;top:423px;width:21px;height:1px;background:#808080;"></div>
<div style="left:773px;top:404px;width:1px;height:20px;background:#808080;"></div>
<svg style="left:752px;top:355px" width="23" height="22" viewBox="0 0 23 22">
<path d="M12,5 L16.6,9.6 H13.5 V16.5 H10.5 V9.6 H7.4 Z" fill="#00ffff" stroke="#000" stroke-width="1"/></svg>
<svg style="left:752px;top:379px" width="23" height="22" viewBox="0 0 23 22">
<path d="M7.8,11.4 H17.8 M12.7,6.4 V16.4" stroke="#fff" stroke-width="2.4" fill="none"/>
<path d="M6.8,10.3 H16.8 M11.7,5.5 V15.3" stroke="#000080" stroke-width="2.5" fill="none"/></svg>
<svg style="left:752px;top:403px" width="23" height="22" viewBox="0 0 23 22">
<path d="M12,17 L16.6,12.4 H13.5 V5.5 H10.5 V12.4 H7.4 Z" fill="#00ffff" stroke="#000" stroke-width="1"/></svg>
<div style="left:748px;top:431px;width:32px;height:32px;background:#c0c0c0;"></div>
<div style="left:748px;top:431px;width:32px;height:1px;background:#fff;"></div>
<div style="left:748px;top:431px;width:1px;height:32px;background:#fff;"></div>
<div style="left:748px;top:462px;width:32px;height:1px;background:#000;"></div>
<div style="left:779px;top:431px;width:1px;height:32px;background:#000;"></div>
<div style="left:749px;top:461px;width:30px;height:1px;background:#808080;"></div>
<div style="left:778px;top:432px;width:1px;height:30px;background:#808080;"></div>
<svg style="left:748px;top:431px" width="32" height="32" viewBox="0 0 32 32">
<circle cx="15" cy="15" r="5.5" fill="#c8c8c8" stroke="#000" stroke-width="1.2"/>
<path d="M12.5,17 A3.5,3.5 0 0 0 17.5,17" fill="none" stroke="#fff" stroke-width="1"/>
<path d="M19,19 L23.5,23.5" stroke="#000" stroke-width="2.2"/></svg>
<div style="left:752px;top:469px;width:23px;height:22px;background:#c0c0c0;"></div>
<div style="left:752px;top:469px;width:23px;height:1px;background:#fff;"></div>
<div style="left:752px;top:469px;width:1px;height:22px;background:#fff;"></div>
<div style="left:752px;top:490px;width:23px;height:1px;background:#000;"></div>
<div style="left:774px;top:469px;width:1px;height:22px;background:#000;"></div>
<div style="left:753px;top:489px;width:21px;height:1px;background:#808080;"></div>
<div style="left:773px;top:470px;width:1px;height:20px;background:#808080;"></div>
<span style="left:759.0px;top:473px;font-size:13px;line-height:13px;color:#000;font-weight:bold;transform:scaleX(0.9052)">A</span>
<div style="left:752px;top:493px;width:23px;height:22px;background:#c0c0c0;"></div>
<div style="left:752px;top:493px;width:23px;height:1px;background:#fff;"></div>
<div style="left:752px;top:493px;width:1px;height:22px;background:#fff;"></div>
<div style="left:752px;top:514px;width:23px;height:1px;background:#000;"></div>
<div style="left:774px;top:493px;width:1px;height:22px;background:#000;"></div>
<div style="left:753px;top:513px;width:21px;height:1px;background:#808080;"></div>
<div style="left:773px;top:494px;width:1px;height:20px;background:#808080;"></div>
<span style="left:759.0px;top:497px;font-size:13px;line-height:13px;color:#000;font-weight:bold;transform:scaleX(0.9052)">B</span>
<div style="left:752px;top:517px;width:23px;height:22px;background:#c0c0c0;"></div>
<div style="left:752px;top:517px;width:23px;height:1px;background:#fff;"></div>
<div style="left:752px;top:517px;width:1px;height:22px;background:#fff;"></div>
<div style="left:752px;top:538px;width:23px;height:1px;background:#000;"></div>
<div style="left:774px;top:517px;width:1px;height:22px;background:#000;"></div>
<div style="left:753px;top:537px;width:21px;height:1px;background:#808080;"></div>
<div style="left:773px;top:518px;width:1px;height:20px;background:#808080;"></div>
<span style="left:759.0px;top:521px;font-size:13px;line-height:13px;color:#000;font-weight:bold;transform:scaleX(0.9052)">C</span>
<div style="left:752px;top:541px;width:23px;height:22px;background:#c0c0c0;"></div>
<div style="left:752px;top:541px;width:23px;height:1px;background:#fff;"></div>
<div style="left:752px;top:541px;width:1px;height:22px;background:#fff;"></div>
<div style="left:752px;top:562px;width:23px;height:1px;background:#000;"></div>
<div style="left:774px;top:541px;width:1px;height:22px;background:#000;"></div>
<div style="left:753px;top:561px;width:21px;height:1px;background:#808080;"></div>
<div style="left:773px;top:542px;width:1px;height:20px;background:#808080;"></div>
<span style="left:759.0px;top:545px;font-size:13px;line-height:13px;color:#000;font-weight:bold;transform:scaleX(0.9052)">D</span>
<div style="left:62px;top:452px;width:115px;height:66px;background:#808080;"></div>
<div style="left:62px;top:517px;width:115px;height:1px;background:#fff;"></div>
<div style="left:176px;top:452px;width:1px;height:66px;background:#fff;"></div>
<div style="left:63px;top:453px;width:113px;height:64px;background:linear-gradient(122deg,#48005c 0%,#6c0a7c 22%,#8a1496 48%,#a822ae 76%,#c434c4 100%)"></div>
<svg style="left:99px;top:475px" width="18" height="14" viewBox="0 0 18 14">
<path d="M2,3.5 L6.5,3 L9.5,1.5 L10.5,3.5 L14.5,3.5 L11,6.5 L12,8.5 L15.5,9.5 L10,9.5 L8,10 L4,12.5 L6.5,8 L5,5.5 Z" fill="#9a7a20"/>
<path d="M2,3.5 L6.5,3 L6,5.5 Z" fill="#4e8a18"/><path d="M10.5,8 L15.5,9.8 L10,9.8 Z" fill="#2c5a14"/><path d="M4,12.5 L6.2,9 L7.5,10 Z" fill="#8a8a20"/>
<path d="M6.5,4 L10,3.5 L10.5,7.5 L7,8 Z" fill="#d0442c"/>
</svg>
<div style="left:44px;top:525px;width:153px;height:22px;background:#c0c0c0;"></div>
<div style="left:44px;top:525px;width:153px;height:1px;background:#fff;"></div>
<div style="left:44px;top:525px;width:1px;height:22px;background:#fff;"></div>
<div style="left:44px;top:546px;width:153px;height:1px;background:#000;"></div>
<div style="left:196px;top:525px;width:1px;height:22px;background:#000;"></div>
<div style="left:45px;top:545px;width:151px;height:1px;background:#808080;"></div>
<div style="left:195px;top:526px;width:1px;height:20px;background:#808080;"></div>
<div style="left:44px;top:549px;width:153px;height:22px;background:#c0c0c0;"></div>
<div style="left:44px;top:549px;width:153px;height:1px;background:#fff;"></div>
<div style="left:44px;top:549px;width:1px;height:22px;background:#fff;"></div>
<div style="left:44px;top:570px;width:153px;height:1px;background:#000;"></div>
<div style="left:196px;top:549px;width:1px;height:22px;background:#000;"></div>
<div style="left:45px;top:569px;width:151px;height:1px;background:#808080;"></div>
<div style="left:195px;top:550px;width:1px;height:20px;background:#808080;"></div>
<span style="left:53.8px;top:529px;font-size:13px;line-height:13px;color:#000;transform:scaleX(0.7999)">Refresh&nbsp;Clip&nbsp;List&nbsp;from&nbsp;Server</span>
<span style="left:71.2px;top:553px;font-size:13px;line-height:13px;color:#000;transform:scaleX(0.8394)">Reconnect&nbsp;to&nbsp;Server</span>
<div style="left:4px;top:575px;width:792px;height:1px;background:#808080;"></div>
<div style="left:4px;top:575px;width:1px;height:21px;background:#808080;"></div>
<div style="left:4px;top:595px;width:792px;height:1px;background:#fff;"></div>
<div style="left:795px;top:576px;width:1px;height:20px;background:#fff;"></div>
<div style="left:794px;top:576px;width:1px;height:20px;background:#fff;"></div>
<div style="left:5px;top:576px;width:152px;height:1px;background:#808080;"></div>
<div style="left:5px;top:576px;width:1px;height:19px;background:#808080;"></div>
<div style="left:5px;top:594px;width:152px;height:1px;background:#fff;"></div>
<div style="left:156px;top:576px;width:1px;height:19px;background:#fff;"></div>
<div style="left:164px;top:576px;width:481px;height:1px;background:#808080;"></div>
<div style="left:164px;top:576px;width:1px;height:19px;background:#808080;"></div>
<div style="left:164px;top:594px;width:481px;height:1px;background:#fff;"></div>
<div style="left:644px;top:576px;width:1px;height:19px;background:#fff;"></div>
<div style="left:652px;top:576px;width:143px;height:1px;background:#808080;"></div>
<div style="left:652px;top:576px;width:1px;height:19px;background:#808080;"></div>
<div style="left:652px;top:594px;width:143px;height:1px;background:#fff;"></div>
<div style="left:794px;top:576px;width:1px;height:19px;background:#fff;"></div>
<div style="left:6px;top:577px;width:150px;height:17px;background:#008000;"></div>
</body></html>
